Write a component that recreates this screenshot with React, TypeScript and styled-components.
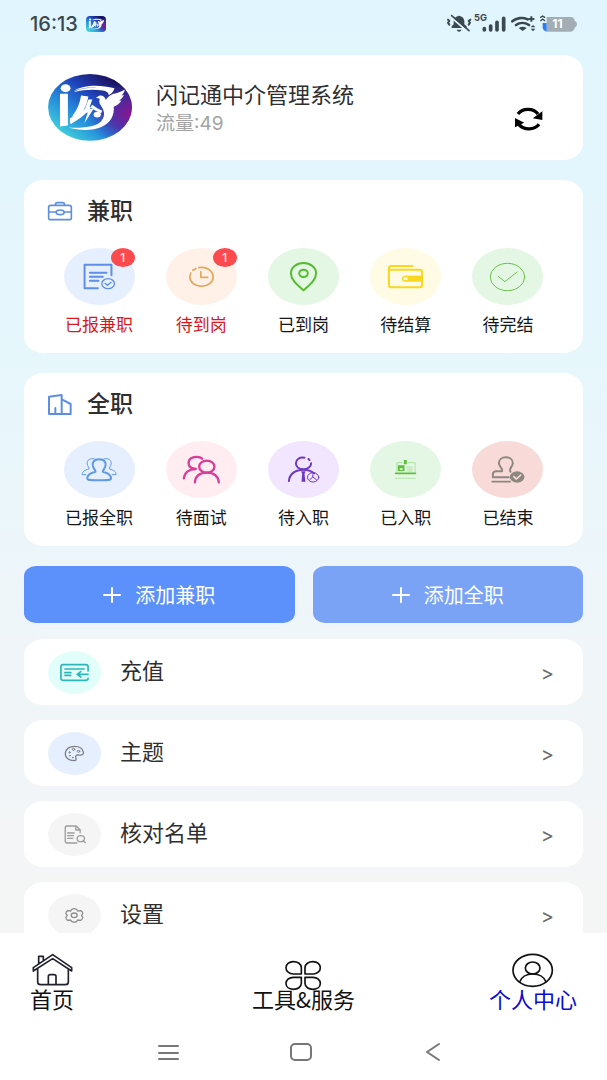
import React from "react";
import styled, { createGlobalStyle } from "styled-components";

const GlobalStyle = createGlobalStyle`
  *, *::before, *::after { box-sizing: border-box; }
  body { margin: 0; }
  button { border: 0; padding: 0; background: none; font: inherit; color: inherit; cursor: pointer; }
  h1, h2, p { margin: 0; font-weight: 400; }
  a { color: inherit; text-decoration: none; }
  svg { display: block; flex: none; overflow: visible; }
`;

const Screen = styled.div`
  display: flex;
  flex-direction: column;
  height: 100vh;
  background: linear-gradient(180deg, #e1f5fe 0%, #e6f7fc 32%, #f0f5f9 62%, #f5f5f5 86%);
  font-family: Inter, "Noto Sans CJK SC", sans-serif;
  color: #2f2f2f;
`;

const StatusBar = styled.header`
  display: flex;
  flex: none;
  align-items: center;
  justify-content: space-between;
  height: 47px;
  padding: 0 30px;
  font-size: 20px;
  font-weight: 500;
  color: #3a4850;
`;

const StatusGroup = styled.div<{ $gap: number }>`
  display: flex;
  align-items: center;
  gap: ${(p) => p.$gap}px;
`;

const Content = styled.main`
  flex: 1;
  min-height: 0;
  overflow-y: auto;
  scrollbar-width: none;
  padding: 8px 24px 24px;
`;

const Card = styled.section`
  margin-bottom: 20px;
  padding: 16px 24px;
  border-radius: 20px / 16px;
  background: #fff;
`;

const ProfileCard = styled(Card)`
  display: flex;
  align-items: center;
  gap: 24px;
  min-height: 105px;
  padding-right: 40px;
`;

const ProfileText = styled.div`
  flex: 1;
  padding-top: 2px;
`;

const ProfileName = styled.h1`
  font-size: 22px;
  line-height: 30px;
`;

const Traffic = styled.p`
  font-size: 19px;
  line-height: 28px;
  color: #a3a3a3;
`;

const RefreshButton = styled.button`
  padding-top: 22px;
`;

const Heading = styled.h2`
  display: flex;
  align-items: center;
  gap: 15px;
  height: 30px;
  margin-bottom: 22px;
  font-size: 23px;
  line-height: 30px;
  font-weight: 500;
`;

const StageGrid = styled.div`
  display: grid;
  grid-template-columns: repeat(5, 1fr);
`;

const Stage = styled.button<{ $alert?: boolean }>`
  display: flex;
  flex-direction: column;
  align-items: center;
  gap: 8px;
  font-size: 17px;
  line-height: 24px;
  white-space: nowrap;
  color: ${(p) => (p.$alert ? "#d5191e" : "#161616")};
`;

const Bubble = styled.span<{ $tint: string; $small?: boolean }>`
  position: relative;
  display: block;
  flex: none;
  width: ${(p) => (p.$small ? 53 : 71)}px;
  height: ${(p) => (p.$small ? 43 : 57)}px;
  border-radius: 50%;
  background: ${(p) => p.$tint};
`;

const Badge = styled.span`
  position: absolute;
  top: 0;
  right: 0;
  width: 24px;
  height: 19px;
  border-radius: 50%;
  background: #fb4b4e;
  color: #fff;
  font-size: 12px;
  line-height: 19px;
  text-align: center;
`;

const Actions = styled.div`
  display: grid;
  grid-template-columns: 1fr 1fr;
  gap: 18px;
  margin-bottom: 16px;
`;

const ActionButton = styled.button<{ $tone: string }>`
  display: flex;
  align-items: center;
  justify-content: center;
  gap: 14px;
  height: 57px;
  border-radius: 12px / 10px;
  background: ${(p) => p.$tone};
  color: #fff;
  font-size: 20px;
`;

const Menu = styled.nav`
  display: flex;
  flex-direction: column;
  gap: 15px;
`;

const MenuRow = styled.a`
  display: flex;
  align-items: center;
  gap: 19px;
  height: 66px;
  padding: 0 29px 0 24px;
  border-radius: 20px / 16px;
  background: #fff;
  font-size: 22px;
`;

const MenuLabel = styled.span`
  flex: 1;
  line-height: 30px;
  padding-bottom: 2px;
`;

const Chevron = styled.span`
  padding-top: 2px;
  font-size: 20px;
  color: #6b6b6b;
`;

const TabBar = styled.nav`
  display: grid;
  flex: none;
  grid-template-columns: 1fr auto 1fr;
  padding: 20px 30px 17px;
  background: #fff;
`;

const Tab = styled.a<{ $side: "start" | "center" | "end"; $active?: boolean }>`
  display: flex;
  flex-direction: column;
  align-items: center;
  justify-self: ${(p) => p.$side};
  font-family: "Noto Sans CJK SC", sans-serif;
  font-size: 22px;
  line-height: 18px;
  color: ${(p) => (p.$active ? "#0a0ad2" : "#111")};
`;

const SystemBar = styled.footer`
  display: grid;
  flex: none;
  grid-template-columns: repeat(3, 22%);
  align-items: center;
  justify-content: center;
  height: 56px;
  padding-right: 5px;
  background: #fff;
`;

const SystemButton = styled.button`
  display: flex;
  align-items: center;
  justify-content: center;
  height: 32px;
`;

type IconProps = {
  w: number;
  h: number;
  box: string;
  color: string;
  stroke?: number;
  children: React.ReactNode;
};

const Icon = ({ w, h, box, color, stroke = 4, children }: IconProps) => (
  <svg
    width={w}
    height={h}
    viewBox={box}
    fill="none"
    stroke={color}
    strokeWidth={stroke}
    strokeLinecap="round"
    strokeLinejoin="round"
    preserveAspectRatio="none"
    aria-hidden="true"
  >
    {children}
  </svg>
);

const LogoDefs = ({ id }: { id: string }) => (
  <defs>
    <linearGradient id={`${id}-base`} x1="0.1" y1="0.85" x2="0.8" y2="0.1">
      <stop offset="0" stopColor="#3fd0dc" />
      <stop offset="0.35" stopColor="#2489da" />
      <stop offset="0.65" stopColor="#1f45bd" />
      <stop offset="1" stopColor="#1a0f5c" />
    </linearGradient>
    <radialGradient id={`${id}-glow`} cx="0.98" cy="0.6" r="0.5">
      <stop offset="0" stopColor="#8c1590" />
      <stop offset="0.5" stopColor="#5a2aa0" stopOpacity="0.75" />
      <stop offset="1" stopColor="#3a4ac0" stopOpacity="0" />
    </radialGradient>
  </defs>
);

const LogoMark = () => (
  <g fill="#fff" stroke="none">
    <ellipse cx="195" cy="264" rx="15" ry="12" />
    <path d="M178 281H202V377L178 380Z" />
    <path d="M220 272C250 253 300 253 343 264C341 273 334 281 326 285C325 277 318 272 308 271C280 267 250 268 220 276C236 264 270 262 290 263C270 260 240 264 220 272Z" />
    <path d="M242 286L264 289C262 303 258 315 250 330C240 348 228 362 211 373L217 346C230 330 238 310 242 286Z" />
    <path d="M208 356C222 348 246 334 262 320L272 322C258 342 234 362 208 372Z" />
    <path d="M276 298L266 326H280L252 370L262 338H250L264 298Z" />
    <path d="M287 293L298 286C308 285 315 291 317 300C322 290 334 282 345 280C356 277 366 274 375 268C373 276 370 281 364 286L372 285C368 293 364 298 357 301L364 302C358 311 350 317 341 320C343 345 333 368 305 381C275 394 236 393 203 383C250 386 288 380 303 364C319 345 310 328 299 312C296 306 297 300 299 296Z" />
    <path d="M276 314C286 322 296 328 306 332L303 340C292 336 280 330 270 322Z" />
    <ellipse cx="291" cy="344" rx="11" ry="9" />
  </g>
);

const Avatar = () => (
  <svg width="84" height="67" viewBox="142 221 254 203" role="img" aria-label="logo">
    <LogoDefs id="avatar" />
    <ellipse cx="269" cy="322" rx="127" ry="101" fill="url(#avatar-base)" />
    <ellipse cx="269" cy="322" rx="127" ry="101" fill="url(#avatar-glow)" />
    <LogoMark />
  </svg>
);

const MiniLogo = () => (
  <svg width="20" height="16" viewBox="142 221 254 203" aria-hidden="true">
    <LogoDefs id="mini" />
    <rect x="142" y="221" width="254" height="203" rx="50" ry="46" fill="url(#mini-base)" />
    <rect x="142" y="221" width="254" height="203" rx="50" ry="46" fill="url(#mini-glow)" />
    <LogoMark />
  </svg>
);

const StatusIcons = () => (
  <StatusGroup $gap={4}>
    <Icon w={24} h={19} box="423 40 72 57" color="#3a4850">
      <path d="M437 82V77L443 71V61Q445 48 459 45Q474 48 475 61V71L482 77V82Z" fill="#3a4850" stroke="none" />
      <path d="M452 87H467Q464 93 459 93Q454 93 452 87Z" fill="#3a4850" stroke="none" />
      <path d="M434 48L484 92" stroke="#e3f6fd" strokeWidth="6" />
      <path d="M437 45L489 90" strokeWidth="5" />
      <path d="M426 57L430 61L426 66L430 72M493 57L488 61L492 66L488 72" strokeWidth="6" />
    </Icon>
    <Icon w={31} h={19} box="508 40 93 57" color="#3a4850" stroke={11}>
      <text x="505" y="61" fill="#3a4850" stroke="none" fontSize="28" fontWeight="700">5G</text>
      <path d="M536 84V88M555 76V88M574 65V88M594 53V88" />
    </Icon>
    <Icon w={26} h={19} box="617 40 78 57" color="#3a4850" stroke={8}>
      <path d="M624 62C636 51 655 49 670 56M635 73C646 65 662 65 674 73" />
      <path d="M643 82Q655 75 667 82L655 91Z" fill="#3a4850" stroke="none" />
      <path d="M672 55H690M681 47V63" strokeWidth="6" strokeLinecap="butt" />
      <path d="M679 80L686 73L693 80ZM679 84L686 92L693 84Z" fill="#3a4850" stroke="none" />
    </Icon>
    <Icon w={37} h={19} box="704 40 111 57" color="#3a4850">
      <path d="M724 49H795Q808 50 808 60Q815 62 815 71Q815 79 808 81Q806 92 795 93H724Z" fill="#a3adb4" stroke="none" />
      <path d="M712 67H724V93Q713 91 712 80Z" fill="#2f7bf0" stroke="none" />
      <path d="M706 50L712 46L718 50M706 60L712 55L718 60" />
      <text x="741" y="83" fill="#fff" stroke="none" fontSize="36" fontWeight="700">11</text>
    </Icon>
  </StatusGroup>
);

type StageData = {
  label: string;
  tint: string;
  color: string;
  stroke: number;
  box: string;
  badge?: number;
  art: React.ReactNode;
};

const partTime: StageData[] = [
  {
    label: "已报兼职", tint: "#e6effd", color: "#5d8fe8", stroke: 6, box: "129 204 214 171", badge: 1,
    art: (
      <>
        <path d="M272 286V254H191V325H231M207 278H257M207 290H246M207 302H233" />
        <ellipse cx="262" cy="311" rx="19" ry="15" strokeWidth="4" />
        <path d="M253 310L260 316L271 307" strokeWidth="4" />
      </>
    ),
  },
  {
    label: "待到岗", tint: "#fff1e8", color: "#e2a757", stroke: 5, box: "435 204 214 171", badge: 1,
    art: <path d="M534 263C560 259 577 274 577 291C577 307 561 319 542 319C523 319 507 307 507 291C507 287 508 283 510 279M516 271L525 266M540 275V292H561" />,
  },
  {
    label: "已到岗", tint: "#e4f7e4", color: "#55bb2f", stroke: 6, box: "-98 204 214 171",
    art: (
      <>
        <path d="M9 331C-14 311 -29 298 -29 280C-29 262 -12 249 9 249C30 249 47 262 47 280C47 298 32 311 9 331Z" />
        <ellipse cx="9" cy="280" rx="13" ry="11" />
      </>
    ),
  },
  {
    label: "待结算", tint: "#fffbe4", color: "#f8d71e", stroke: 6, box: "210 204 214 171",
    art: (
      <>
        <path d="M338 258H275Q267 258 267 265V315Q267 322 275 322H359Q367 322 367 315V276Q367 269 359 269H270" />
        <path d="M316 287H367V305H316Z" fill="#f8d71e" stroke="none" />
        <ellipse cx="317" cy="296" rx="9" ry="7" fill="#fffbe4" strokeWidth="4" />
      </>
    ),
  },
  {
    label: "待完结", tint: "#e4f7e4", color: "#6dc04c", stroke: 3, box: "516 204 214 171",
    art: (
      <>
        <ellipse cx="623" cy="291" rx="52" ry="41" />
        <path d="M595 289L615 305L652 276" />
      </>
    ),
  },
];

const fullTime: StageData[] = [
  {
    label: "已报全职", tint: "#e6effd", color: "#6199e4", stroke: 6, box: "129 200 214 171",
    art: (
      <>
        <path d="M235 255C250 255 257 264 254 275C252 283 247 286 246 292C262 296 271 303 271 312C271 318 262 318 235 318C208 318 199 318 199 312C199 303 208 296 224 292C223 286 218 283 216 275C213 264 220 255 235 255Z" />
        <path d="M221 254C208 250 197 257 199 269C200 276 206 280 204 284C192 287 183 292 184 301H195M249 254C262 250 273 257 271 269C270 276 264 280 266 284C278 287 287 292 286 301H275" strokeWidth="3" />
      </>
    ),
  },
  {
    label: "待面试", tint: "#ffedf2", color: "#d83d98", stroke: 7, box: "435 200 214 171",
    art: (
      <>
        <ellipse cx="558" cy="277" rx="23" ry="18" />
        <path d="M522 324C524 305 538 295 558 295C578 295 592 305 594 324M544 253C533 243 503 247 503 266C503 277 513 283 525 284C505 284 491 295 489 312" />
      </>
    ),
  },
  {
    label: "待入职", tint: "#f1e6fe", color: "#6c38bd", stroke: 6, box: "-98 200 214 171",
    art: (
      <>
        <path d="M12 250C-3 247 -14 256 -14 267C-14 278 -4 285 9 285C22 285 32 277 32 267M24 254L27 257M-35 320C-33 298 -15 286 9 286C24 286 34 291 41 297" />
        <path d="M2 291H15L12 299L15 322H3L5 299Z" fill="#6c38bd" stroke="none" />
        <ellipse cx="38" cy="309" rx="17" ry="14" strokeWidth="3" />
        <path d="M37 301V308L28 316M37 308L48 316" strokeWidth="3" />
      </>
    ),
  },
  {
    label: "已入职", tint: "#e4f7e4", color: "#5cbf3b", stroke: 2, box: "210 200 214 171",
    art: (
      <>
        <path d="M291 291V265H307M326 265H346V293M322 278H337M322 284H337M322 290H337" strokeOpacity="0.6" />
        <path d="M312 257H321V270H312ZM294 273H314V290H294Z" fill="#5cbf3b" stroke="none" />
        <ellipse cx="304" cy="284" rx="5" ry="3" fill="#e4f7e4" stroke="none" />
        <path d="M287 297H347" strokeWidth="5" />
        <path d="M286 312H347" strokeDasharray="6 4" strokeOpacity="0.6" />
      </>
    ),
  },
  {
    label: "已结束", tint: "#f8dbd8", color: "#8d8782", stroke: 6, box: "516 200 214 171",
    art: (
      <>
        <path d="M632 292C626 282 639 278 639 266C639 256 630 249 618 249C606 249 597 256 597 266C597 278 611 282 606 291H588Q579 292 579 299V309H627" />
        <path d="M577 322H631" strokeWidth="5" />
        <ellipse cx="652" cy="308" rx="22" ry="17" fill="#8d8782" stroke="none" />
        <path d="M642 307L650 314L663 302" stroke="#f8dbd8" strokeWidth="5" />
      </>
    ),
  },
];

const menu = [
  {
    label: "充值", tint: "#e2fefb", color: "#2db7b6", stroke: 5, box: "144 285 160 129",
    art: <path d="M265 345V332Q265 326 258 326H190Q183 326 183 332V367Q183 373 190 373H258Q265 373 265 367M195 339H253M195 350H213M195 358H213M265 355H233M243 347L232 355L243 363" />,
  },
  {
    label: "主题", tint: "#e6effd", color: "#7d8086", stroke: 4, box: "144 -42 160 129",
    art: (
      <>
        <path d="M224 1C208 1 196 10 196 23C196 36 208 44 222 44C230 44 230 40 228 35C226 29 230 26 237 27C246 28 252 26 251 19C249 8 238 1 224 1Z" />
        <ellipse cx="221" cy="10" rx="4" ry="3" strokeWidth="3" />
        <ellipse cx="236" cy="16" rx="4" ry="3" strokeWidth="3" />
        <ellipse cx="209" cy="19" rx="2" ry="2" strokeWidth="3" />
        <ellipse cx="210" cy="29" rx="1" ry="1" strokeWidth="3" />
        <ellipse cx="219" cy="35" rx="1" ry="1" strokeWidth="3" />
      </>
    ),
  },
  {
    label: "核对名单", tint: "#f5f5f5", color: "#9d9d9d", stroke: 4, box: "144 202 160 129",
    art: (
      <>
        <path d="M241 261V252L229 241H201Q196 241 196 246V287Q196 292 201 292H231M228 242V253H240M203 262H223M203 270H221M203 278H219" />
        <ellipse cx="243" cy="279" rx="11" ry="9" />
        <path d="M250 285L257 291" />
      </>
    ),
  },
  {
    label: "设置", tint: "#f5f5f5", color: "#8f8f8f", stroke: 4, box: "144 446 160 129",
    art: (
      <>
        <path d="M216 492Q223 488 230 492L234 497L243 496Q249 499 249 505L245 510L249 516Q249 522 243 525L234 524L230 529Q223 532 216 529L212 524L203 525Q198 522 198 516L202 510L198 505Q198 499 203 496L212 497Z" />
        <ellipse cx="223" cy="510" rx="9" ry="7" />
      </>
    ),
  },
];

const Stages = ({ items }: { items: StageData[] }) => (
  <StageGrid>
    {items.map((s) => (
      <Stage key={s.label} type="button" $alert={s.badge !== undefined}>
        <Bubble $tint={s.tint}>
          <Icon w={71} h={57} box={s.box} color={s.color} stroke={s.stroke}>{s.art}</Icon>
          {s.badge !== undefined && <Badge>{s.badge}</Badge>}
        </Bubble>
        {s.label}
      </Stage>
    ))}
  </StageGrid>
);

const Plus = () => (
  <Icon w={18} h={16} box="0 0 18 16" color="#fff" stroke={2}>
    <path d="M1 8H17M9 1V15" />
  </Icon>
);

export default function App() {
  return (
    <Screen>
      <GlobalStyle />
      <StatusBar>
        <StatusGroup $gap={8}>
          <span>16:13</span>
          <MiniLogo />
        </StatusGroup>
        <StatusIcons />
      </StatusBar>

      <Content>
        <ProfileCard>
          <Avatar />
          <ProfileText>
            <ProfileName>闪记通中介管理系统</ProfileName>
            <Traffic>流量:49</Traffic>
          </ProfileText>
          <RefreshButton type="button" aria-label="刷新">
            <Icon w={29} h={24} box="630 320 88 72" color="#000" stroke={10}>
              <path d="M642 341C656 323 688 322 703 341M706 372C692 390 660 390 645 373" strokeLinecap="butt" />
              <path d="M716 333V359L687 354ZM633 353V381L661 367Z" fill="#000" stroke="none" />
            </Icon>
          </RefreshButton>
        </ProfileCard>

        <Card>
          <Heading>
            <Icon w={24} h={19} box="87 68 73 57" color="#5d8fe0" stroke={5}>
              <path d="M138 121H151M151 121Q158 121 158 115V84Q158 78 151 78H95Q89 78 89 84V115Q89 121 95 121H135M110 77V74Q110 70 115 70H132Q137 70 137 74V77M89 98H112M136 98H158" />
              <ellipse cx="124" cy="99" rx="12" ry="7" />
            </Icon>
            兼职
          </Heading>
          <Stages items={partTime} />
        </Card>

        <Card>
          <Heading>
            <Icon w={24} h={21} box="88 58 72 63" color="#5d8fe0" stroke={6}>
              <path d="M129 118H91V66L129 61V118H156V88L131 75M110 118V100" />
            </Icon>
            全职
          </Heading>
          <Stages items={fullTime} />
        </Card>

        <Actions>
          <ActionButton type="button" $tone="#5c91fb"><Plus />添加兼职</ActionButton>
          <ActionButton type="button" $tone="#7aa3f5"><Plus />添加全职</ActionButton>
        </Actions>

        <Menu>
          {menu.map((m) => (
            <MenuRow key={m.label} href="#">
              <Bubble $tint={m.tint} $small>
                <Icon w={53} h={43} box={m.box} color={m.color} stroke={m.stroke}>{m.art}</Icon>
              </Bubble>
              <MenuLabel>{m.label}</MenuLabel>
              <Chevron>&gt;</Chevron>
            </MenuRow>
          ))}
        </Menu>
      </Content>

      <TabBar>
        <Tab href="#" $side="start">
          <Icon w={41} h={36} box="95 69 123 108" color="#22222c" stroke={5}>
            <path d="M99 113L157 74L214 113V123L157 86L99 123ZM115 101V79H129V92M112 117V156Q112 164 121 164H195Q204 164 204 156V117M144 163V139Q144 134 150 134H161Q167 134 167 139V163" />
          </Icon>
          首页
        </Tab>
        <Tab href="#" $side="center">
          <Icon w={41} h={36} box="848 69 123 108" color="#111" stroke={5}>
            <path d="M903 132V113C903 102 892 95 879 95C866 95 857 103 857 113C857 124 867 132 879 132ZM914 132V113C914 102 925 95 938 95C951 95 960 103 960 113C960 124 950 132 938 132ZM903 142H879C866 142 857 150 857 160C857 171 866 178 879 178C892 178 903 171 903 160ZM914 142H938C951 142 960 150 960 160C960 171 951 178 938 178C925 178 914 171 914 160Z" />
          </Icon>
          工具&amp;服务
        </Tab>
        <Tab href="#" $side="end" $active aria-current="page">
          <Icon w={41} h={36} box="626 279 123 108" color="#111" stroke={5}>
            <ellipse cx="688" cy="331" rx="59" ry="48" />
            <ellipse cx="688" cy="324" rx="22" ry="18" />
            <path d="M649 366C655 350 670 342 688 342C706 342 722 350 728 366" />
          </Icon>
          个人中心
        </Tab>
      </TabBar>

      <SystemBar>
        <SystemButton type="button" aria-label="菜单">
          <Icon w={21} h={17} box="0 0 21 17" color="#777" stroke={2}>
            <path d="M1 2H20M1 9H20M1 15H20" />
          </Icon>
        </SystemButton>
        <SystemButton type="button" aria-label="主屏幕">
          <Icon w={22} h={18} box="0 0 22 18" color="#777" stroke={2}>
            <rect x="1" y="1" width="20" height="16" rx="4" />
          </Icon>
        </SystemButton>
        <SystemButton type="button" aria-label="返回">
          <Icon w={14} h={18} box="0 0 14 18" color="#777" stroke={2}>
            <path d="M13 1L1 9L13 17" />
          </Icon>
        </SystemButton>
      </SystemBar>
    </Screen>
  );
}
